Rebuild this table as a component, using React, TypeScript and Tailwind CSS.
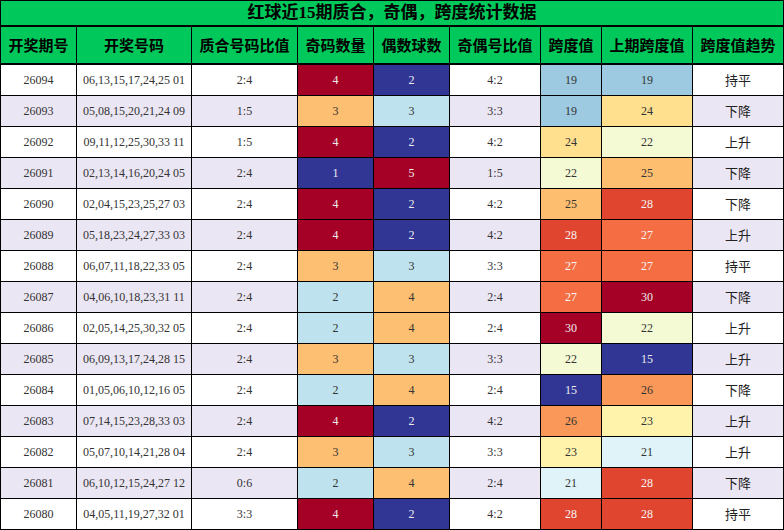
import React from "react";

type Row = {
  issue: string;
  nums: string;
  ratio: string;
  odd: number;
  even: number;
  oe: string;
  span: number;
  prev: number;
  trend: string;
};

const rows: Row[] = [
  { issue: "26094", nums: "06,13,15,17,24,25 01", ratio: "2:4", odd: 4, even: 2, oe: "4:2", span: 19, prev: 19, trend: "持平" },
  { issue: "26093", nums: "05,08,15,20,21,24 09", ratio: "1:5", odd: 3, even: 3, oe: "3:3", span: 19, prev: 24, trend: "下降" },
  { issue: "26092", nums: "09,11,12,25,30,33 11", ratio: "1:5", odd: 4, even: 2, oe: "4:2", span: 24, prev: 22, trend: "上升" },
  { issue: "26091", nums: "02,13,14,16,20,24 05", ratio: "2:4", odd: 1, even: 5, oe: "1:5", span: 22, prev: 25, trend: "下降" },
  { issue: "26090", nums: "02,04,15,23,25,27 03", ratio: "2:4", odd: 4, even: 2, oe: "4:2", span: 25, prev: 28, trend: "下降" },
  { issue: "26089", nums: "05,18,23,24,27,33 03", ratio: "2:4", odd: 4, even: 2, oe: "4:2", span: 28, prev: 27, trend: "上升" },
  { issue: "26088", nums: "06,07,11,18,22,33 05", ratio: "2:4", odd: 3, even: 3, oe: "3:3", span: 27, prev: 27, trend: "持平" },
  { issue: "26087", nums: "04,06,10,18,23,31 11", ratio: "2:4", odd: 2, even: 4, oe: "2:4", span: 27, prev: 30, trend: "下降" },
  { issue: "26086", nums: "02,05,14,25,30,32 05", ratio: "2:4", odd: 2, even: 4, oe: "2:4", span: 30, prev: 22, trend: "上升" },
  { issue: "26085", nums: "06,09,13,17,24,28 15", ratio: "2:4", odd: 3, even: 3, oe: "3:3", span: 22, prev: 15, trend: "上升" },
  { issue: "26084", nums: "01,05,06,10,12,16 05", ratio: "2:4", odd: 2, even: 4, oe: "2:4", span: 15, prev: 26, trend: "下降" },
  { issue: "26083", nums: "07,14,15,23,28,33 03", ratio: "2:4", odd: 4, even: 2, oe: "4:2", span: 26, prev: 23, trend: "上升" },
  { issue: "26082", nums: "05,07,10,14,21,28 04", ratio: "2:4", odd: 3, even: 3, oe: "3:3", span: 23, prev: 21, trend: "上升" },
  { issue: "26081", nums: "06,10,12,15,24,27 12", ratio: "0:6", odd: 2, even: 4, oe: "2:4", span: 21, prev: 28, trend: "下降" },
  { issue: "26080", nums: "04,05,11,19,27,32 01", ratio: "3:3", odd: 4, even: 2, oe: "4:2", span: 28, prev: 28, trend: "持平" },
];

// four steps, dark blue -> light blue -> orange -> dark red
const countTone = [
  "bg-[#313695] text-[#ededed]",
  "bg-[#bfe3ee] text-[#333]",
  "bg-[#fdbf71] text-[#333]",
  "bg-[#a50026] text-[#ededed]",
];

const spanTone: Record<number, string> = {
  15: "bg-[#313695] text-[#ededed]",
  19: "bg-[#9ecae1] text-[#333]",
  21: "bg-[#e0f3f8] text-[#333]",
  22: "bg-[#f4fad4] text-[#333]",
  23: "bg-[#fff3ac] text-[#333]",
  24: "bg-[#fee08f] text-[#333]",
  25: "bg-[#fdbf6f] text-[#333]",
  26: "bg-[#f99858] text-[#333]",
  27: "bg-[#f46d43] text-[#f5f5f5]",
  28: "bg-[#e04530] text-[#f5f5f5]",
  30: "bg-[#a50026] text-[#ededed]",
};

const widths = [
  "w-[76px]",
  "w-[115px]",
  "w-[106px]",
  "w-[76px]",
  "w-[76px]",
  "w-[91px]",
  "w-[61px]",
  "w-[91px]",
  "w-[90px]",
];

const headers = [
  "开奖期号",
  "开奖号码",
  "质合号码比值",
  "奇码数量",
  "偶数球数",
  "奇偶号比值",
  "跨度值",
  "上期跨度值",
  "跨度值趋势",
];

const serif = "font-['Liberation_Serif','Noto_Sans_CJK_SC',serif]";
const cjk = "font-['Noto_Sans_CJK_SC',sans-serif]";

function Cell({
  i,
  className = "",
  children,
}: {
  i: number;
  className?: string;
  children: React.ReactNode;
}) {
  return (
    <div
      className={`${widths[i]} shrink-0 h-full flex items-center justify-center ${
        i < 8 ? "border-r border-black" : ""
      } ${className}`}
    >
      {children}
    </div>
  );
}

export default function App() {
  return (
    <div className="w-[784px] h-[530px] border border-black bg-white flex flex-col overflow-hidden">
      <div
        className={`h-[26px] shrink-0 border-b-2 border-black bg-[#00c85a] flex items-center justify-center text-[17px] font-bold text-black ${serif}`}
      >
        红球近15期质合，奇偶，跨度统计数据
      </div>

      <div className="h-[38px] shrink-0 border-b-2 border-black bg-[#00c85a] flex">
        {headers.map((h, i) => (
          <Cell key={h} i={i} className={`text-[15px] font-bold text-black ${cjk}`}>
            {h}
          </Cell>
        ))}
      </div>

      {rows.map((r, idx) => (
        <div
          key={r.issue}
          className={`h-[31px] shrink-0 flex border-b border-black last:h-[30px] last:border-b-0 ${
            idx % 2 === 1 ? "bg-[#ebe6f4]" : "bg-white"
          } text-[12px] text-[#333] ${serif}`}
        >
          <Cell i={0}>{r.issue}</Cell>
          <Cell i={1}>{r.nums}</Cell>
          <Cell i={2}>{r.ratio}</Cell>
          <Cell i={3} className={countTone[r.odd - 1]}>
            {r.odd}
          </Cell>
          <Cell i={4} className={countTone[r.even - 2]}>
            {r.even}
          </Cell>
          <Cell i={5}>{r.oe}</Cell>
          <Cell i={6} className={spanTone[r.span]}>
            {r.span}
          </Cell>
          <Cell i={7} className={spanTone[r.prev]}>
            {r.prev}
          </Cell>
          <Cell i={8} className={`text-[13px] text-[#222] ${cjk}`}>
            {r.trend}
          </Cell>
        </div>
      ))}
    </div>
  );
}
